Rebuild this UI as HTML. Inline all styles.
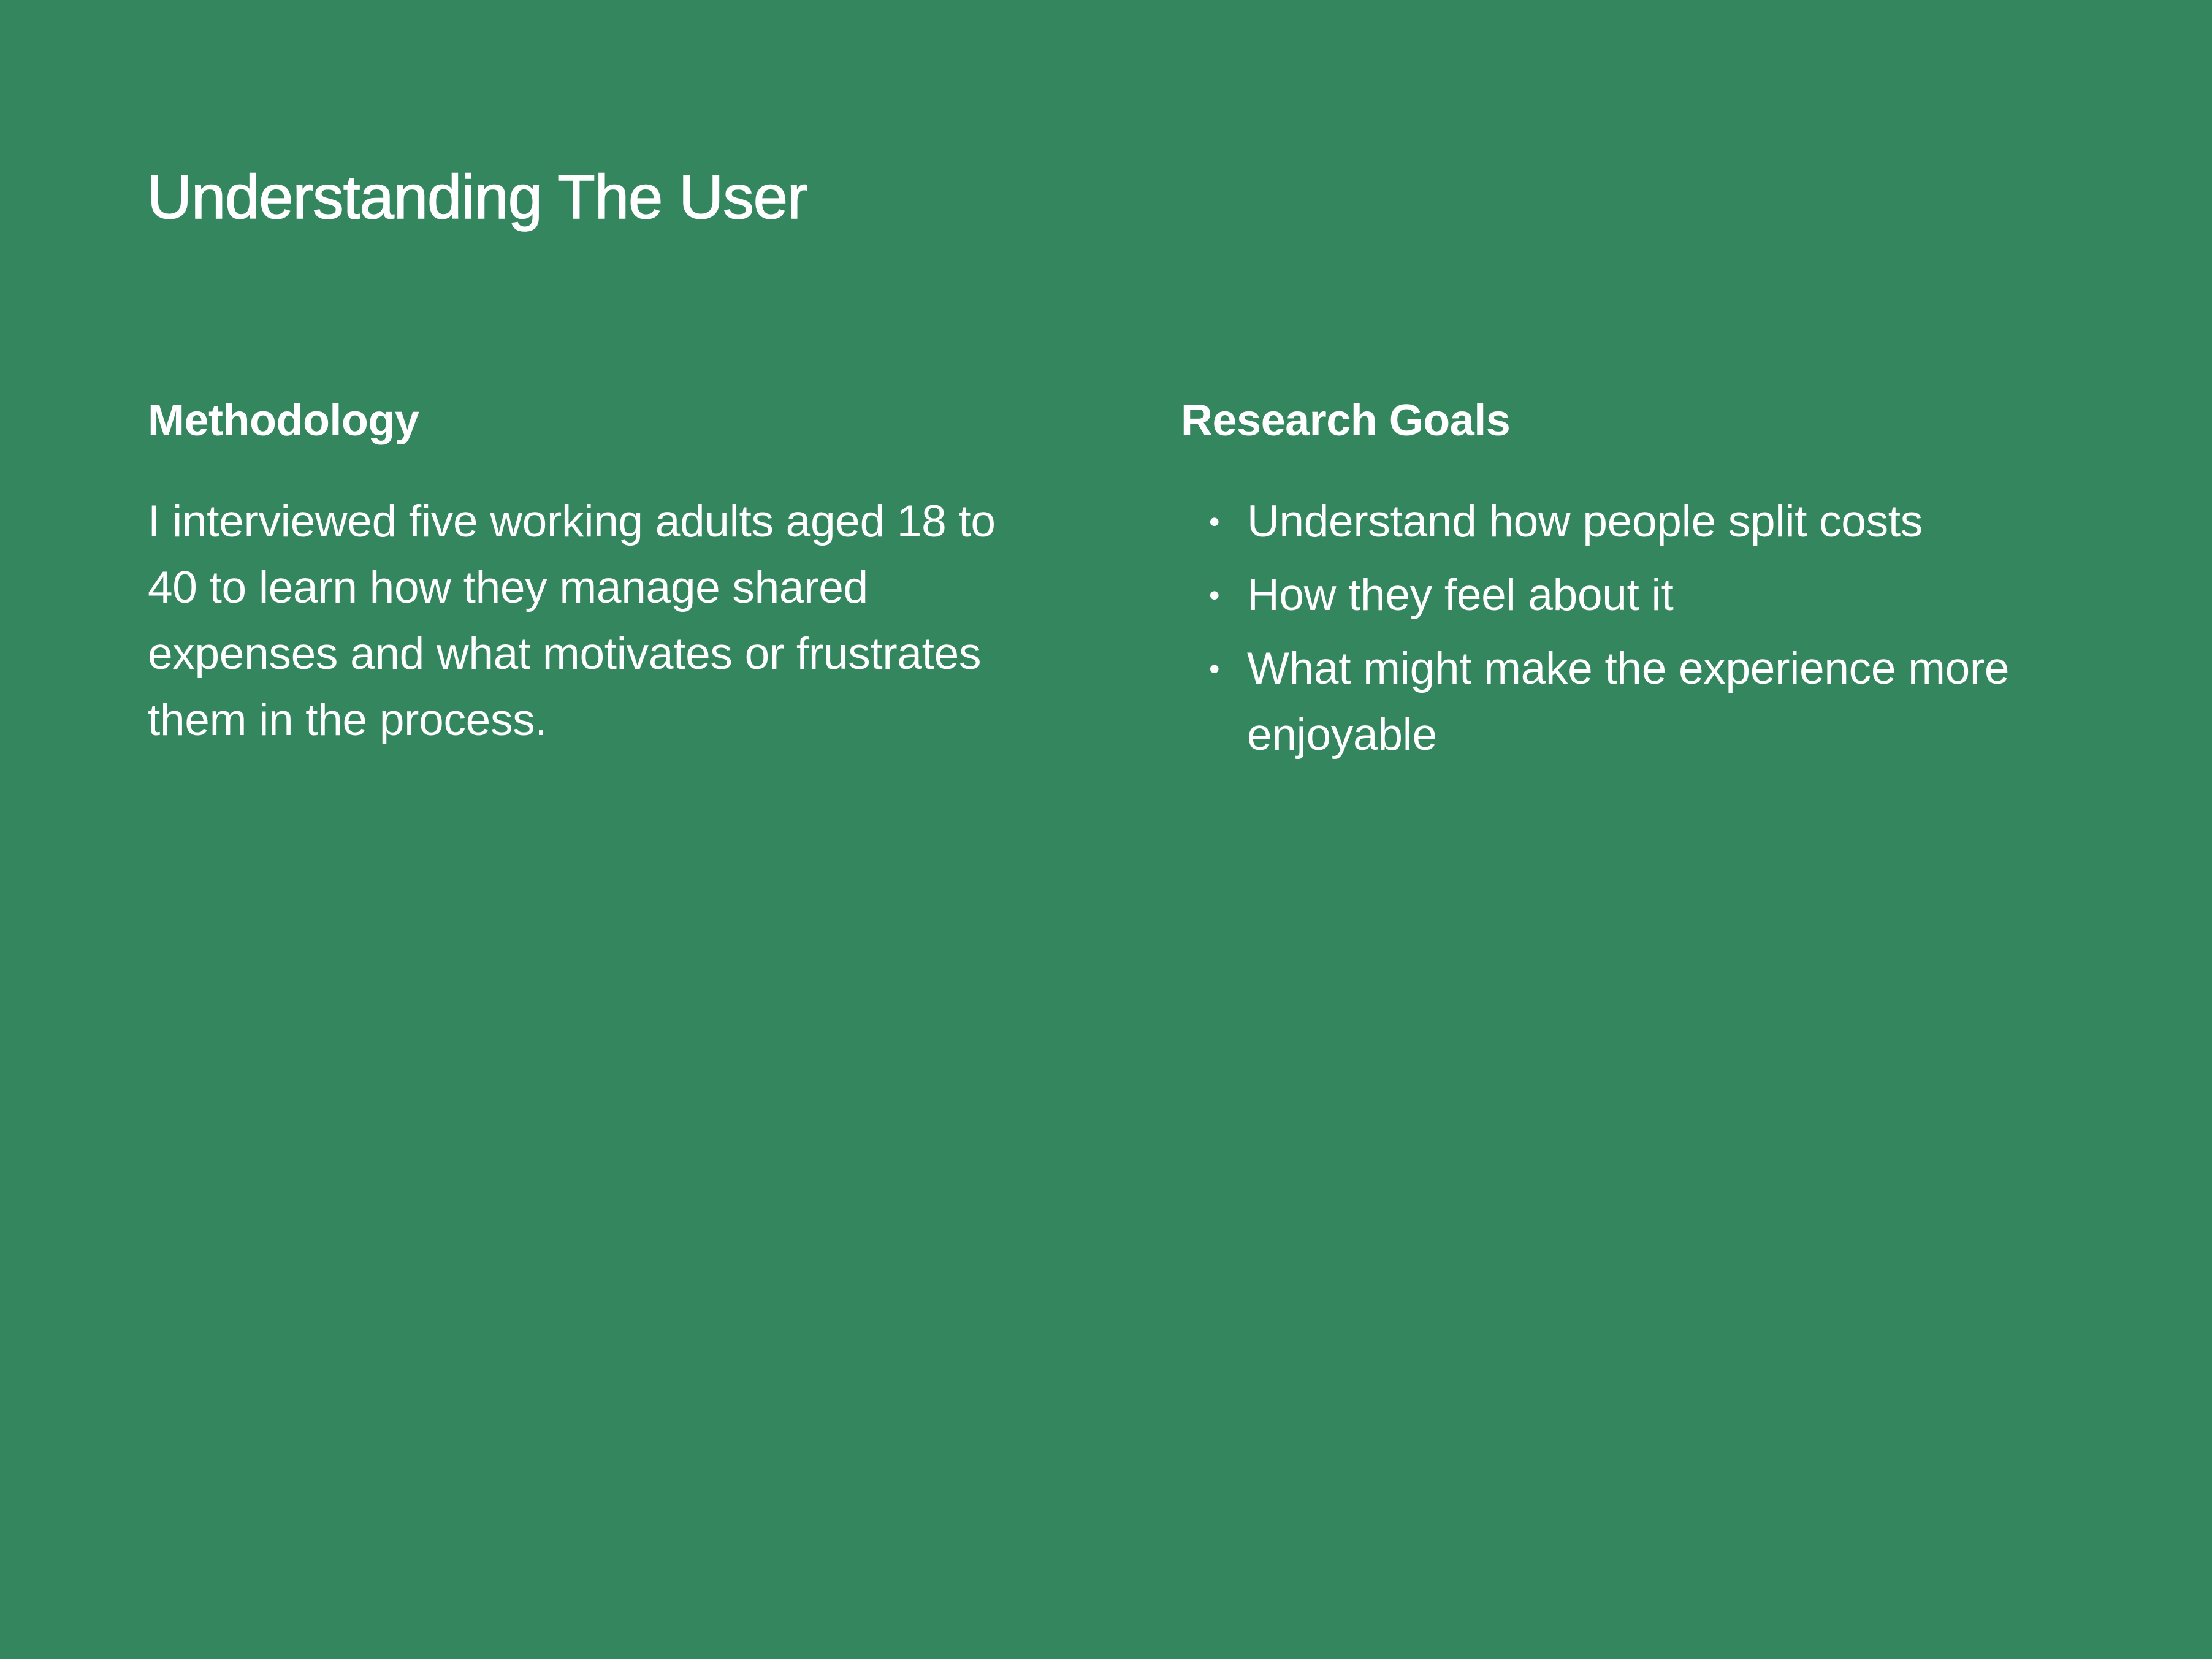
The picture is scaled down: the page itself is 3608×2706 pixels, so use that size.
<!DOCTYPE html>
<html><head><meta charset="utf-8"><style>
html,body{margin:0;padding:0}
body{width:3608px;height:2706px;background:#34865F;position:relative;overflow:hidden;font-family:"Liberation Sans",Arial,sans-serif;color:#fff}
.a{position:absolute;white-space:nowrap}
.t{font-size:101px;line-height:110px;left:240px;top:267px;letter-spacing:-1px;-webkit-text-stroke:1.5px #fff}
.h{font-size:72px;line-height:80px;font-weight:bold;top:646px;letter-spacing:-0.5px}
.b{font-size:73px;line-height:108px;top:797px;letter-spacing:-0.3px}
.li{font-size:73px;line-height:108px;left:2034px;letter-spacing:-0.3px}
.dot{position:absolute;left:-62px;top:0;font-size:50px}
</style></head><body>
<div class="a t">Understanding The User</div>
<div class="a h" style="left:241px">Methodology</div>
<div class="a h" style="left:1926px">Research Goals</div>
<div class="a b" style="left:241px">I interviewed five working adults aged 18 to<br>40 to learn how they manage shared<br>expenses and what motivates or frustrates<br>them in the process.</div>
<div class="a li" style="top:797px"><span class="dot">•</span>Understand how people split costs</div>
<div class="a li" style="top:917px"><span class="dot">•</span>How they feel about it</div>
<div class="a li" style="top:1037px"><span class="dot">•</span>What might make the experience more<br>enjoyable</div>
</body></html>
